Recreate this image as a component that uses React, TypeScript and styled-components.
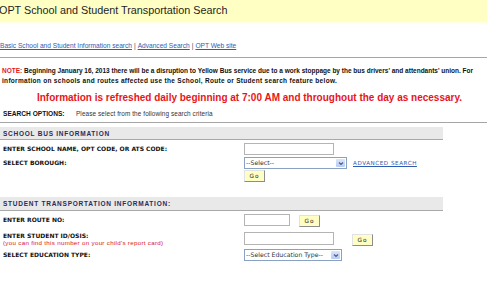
import React from "react";
import styled, { createGlobalStyle } from "styled-components";

const Global = createGlobalStyle`
  html, body { margin: 0; padding: 0; background: #fff; }
  body {
    width: 487px; height: 284px; overflow: hidden;
    font-family: "Liberation Sans", Arial, sans-serif; color: #000;
  }
`;

const Page = styled.div`
  display: flex;
  flex-direction: column;
  width: 487px;
`;

const Header = styled.header`
  height: 24px;
  background: linear-gradient(to bottom, #ffffc4 0, #ffffc4 21px, #ffffff 24px);
`;

const Title = styled.h1`
  margin: 0 0 0 -1px;
  font-size: 10.8px;
  font-weight: normal;
  line-height: 20px;
  color: #1e1e1e;
  white-space: nowrap;
`;

const LinkBar = styled.nav`
  height: 34px;
  box-sizing: border-box;
  padding-top: 18px;
  border-bottom: 1px solid #a6a6a6;
  font-size: 6.6px;
  line-height: 8px;
  color: #444;
  white-space: nowrap;
`;

const NavLink = styled.a`
  color: #2f5cb0;
  text-decoration: underline;
`;

const Sep = styled.span`
  margin: 0 2px;
`;

const Notice = styled.p`
  margin: 0;
  padding: 8px 2px 0;
  font-size: 6.5px;
  font-weight: bold;
  line-height: 9.5px;
  color: #111;
  white-space: nowrap;
`;

const NoticeLine = styled.span<{ $ls: number }>`
  display: block;
  letter-spacing: ${(p) => p.$ls}px;
`;

const NoteTag = styled.span`
  color: #e3161d;
`;

const Refresh = styled.p`
  margin: 7px 0 0;
  padding-left: 12px;
  text-align: center;
  font-size: 10px;
  font-weight: bold;
  line-height: 11px;
  color: #e8141b;
  white-space: nowrap;
`;

const OptionsBar = styled.div`
  display: flex;
  align-items: center;
  margin-top: 7px;
  padding: 0 0 4px 3px;
  line-height: 8px;
  border-bottom: 1px solid #a6a6a6;
`;

const OptionsLabel = styled.span`
  width: 73px;
  font-size: 6.6px;
  font-weight: bold;
  color: #111;
`;

const OptionsText = styled.span`
  font-size: 6.4px;
  letter-spacing: 0.1px;
  color: #333;
  white-space: nowrap;
`;

const Section = styled.section<{ $top: number }>`
  display: flex;
  flex-direction: column;
  margin-top: ${(p) => p.$top}px;
`;

const SectionHeader = styled.h2<{ $h: number }>`
  margin: 0;
  width: 440px;
  height: ${(p) => p.$h}px;
  box-sizing: content-box;
  padding-left: 3px;
  display: flex;
  align-items: center;
  background: #e9e9e9;
  border-bottom: 1px solid #a9a9a9;
  font-size: 6.5px;
  font-weight: bold;
  letter-spacing: 0.75px;
  color: #2b2b5e;
`;

const Row = styled.div<{ $top: number; $h: number; $align?: string }>`
  display: flex;
  align-items: ${(p) => p.$align || "center"};
  margin-top: ${(p) => p.$top}px;
  height: ${(p) => p.$h}px;
`;

const LabelCell = styled.div`
  width: 241px;
  padding-left: 3px;
  display: flex;
  flex-direction: column;
`;

const Label = styled.span`
  font-family: "DejaVu Sans", Verdana, sans-serif;
  font-size: 6px;
  font-weight: bold;
  line-height: 8px;
  color: #111;
  white-space: nowrap;
`;

const Hint = styled.span`
  font-size: 6.2px;
  letter-spacing: 0.3px;
  line-height: 6px;
  color: #d9141b;
  white-space: nowrap;
`;

const Controls = styled.div<{ $gap: number }>`
  display: flex;
  align-items: flex-start;
  gap: ${(p) => p.$gap}px;
`;

const TextBox = styled.input<{ $w: number; $h: number }>`
  width: ${(p) => p.$w}px;
  height: ${(p) => p.$h}px;
  box-sizing: border-box;
  margin: 0;
  padding: 0;
  border: 1px solid #b4b4b4;
  background: #fff;
`;

const SelectBox = styled.div<{ $w: number }>`
  width: ${(p) => p.$w}px;
  height: 12px;
  box-sizing: border-box;
  display: flex;
  align-items: stretch;
  border: 1px solid #8aa2c2;
  background: #fff;
`;

const SelectText = styled.span`
  flex: 1;
  padding-left: 1px;
  font-family: "DejaVu Sans", Verdana, sans-serif;
  font-size: 6.2px;
  line-height: 10px;
  color: #333;
  white-space: nowrap;
  overflow: hidden;
`;

const SelectArrow = styled.span`
  width: 9px;
  margin: 1px;
  display: flex;
  align-items: center;
  justify-content: center;
  background: linear-gradient(to bottom, #dbe5fc, #b8cbf5);
  border-radius: 1px;
`;

const GoButton = styled.button<{ $mt?: number }>`
  width: 21px;
  height: 12px;
  margin: ${(p) => p.$mt || 0}px 0 0;
  padding: 0;
  box-sizing: border-box;
  background: #ffffc4;
  border: 1px solid;
  border-color: #e2e2e2 #8c8c8c #8c8c8c #e2e2e2;
  font-family: "DejaVu Sans", Verdana, sans-serif;
  font-size: 5.8px;
  letter-spacing: 1px;
  line-height: 10px;
  color: #222;
`;

const AdvLink = styled.a`
  margin-left: 6px;
  align-self: center;
  font-family: "DejaVu Sans", Verdana, sans-serif;
  font-size: 5.6px;
  letter-spacing: 0.55px;
  color: #2f5cb0;
  text-decoration: underline;
  white-space: nowrap;
`;

const Chevron = () => (
  <svg width="6" height="5" viewBox="0 0 6 5">
    <path d="M1 1.5 L3 3.5 L5 1.5" fill="none" stroke="#4d6185" strokeWidth="1.2" />
  </svg>
);

const Select = ({ w, text }: { w: number; text: string }) => (
  <SelectBox $w={w}>
    <SelectText>{text}</SelectText>
    <SelectArrow>
      <Chevron />
    </SelectArrow>
  </SelectBox>
);

export default function App() {
  return (
    <Page>
      <Global />
      <Header>
        <Title>OPT School and Student Transportation Search</Title>
      </Header>
      <LinkBar>
        <NavLink>Basic School and Student Information search</NavLink>
        <Sep>|</Sep>
        <NavLink>Advanced Search</NavLink>
        <Sep>|</Sep>
        <NavLink>OPT Web site</NavLink>
      </LinkBar>
      <Notice>
        <NoticeLine $ls={0}>
          <NoteTag>NOTE:</NoteTag> Beginning January 16, 2013 there will be a disruption to Yellow Bus service due to a
          work stoppage by the bus drivers' and attendants' union. For
        </NoticeLine>
        <NoticeLine $ls={0.3}>
          information on schools and routes affected use the School, Route or Student search feature below.
        </NoticeLine>
      </Notice>
      <Refresh>Information is refreshed daily beginning at 7:00 AM and throughout the day as necessary.</Refresh>
      <OptionsBar>
        <OptionsLabel>SEARCH OPTIONS:</OptionsLabel>
        <OptionsText>Please select from the following search criteria</OptionsText>
      </OptionsBar>

      <Section $top={4}>
        <SectionHeader $h={12}>SCHOOL BUS INFORMATION</SectionHeader>
        <Row $top={3} $h={12}>
          <LabelCell>
            <Label>ENTER SCHOOL NAME, OPT CODE, OR ATS CODE:</Label>
          </LabelCell>
          <Controls $gap={0}>
            <TextBox $w={90} $h={12} />
          </Controls>
        </Row>
        <Row $top={2} $h={12}>
          <LabelCell>
            <Label>SELECT BOROUGH:</Label>
          </LabelCell>
          <Controls $gap={0}>
            <Select w={103} text="--Select--" />
            <AdvLink>ADVANCED SEARCH</AdvLink>
          </Controls>
        </Row>
        <Row $top={1} $h={12}>
          <LabelCell />
          <Controls $gap={0}>
            <GoButton>Go</GoButton>
          </Controls>
        </Row>
      </Section>

      <Section $top={15}>
        <SectionHeader $h={13}>STUDENT TRANSPORTATION INFORMATION:</SectionHeader>
        <Row $top={3} $h={12}>
          <LabelCell>
            <Label>ENTER ROUTE NO:</Label>
          </LabelCell>
          <Controls $gap={9}>
            <TextBox $w={46} $h={12} />
            <GoButton $mt={1}>Go</GoButton>
          </Controls>
        </Row>
        <Row $top={6} $h={14} $align="flex-start">
          <LabelCell>
            <Label>ENTER STUDENT ID/OSIS:</Label>
            <Hint>(you can find this number on your child's report card)</Hint>
          </LabelCell>
          <Controls $gap={18}>
            <TextBox $w={90} $h={13} />
            <GoButton $mt={2}>Go</GoButton>
          </Controls>
        </Row>
        <Row $top={3} $h={12}>
          <LabelCell>
            <Label>SELECT EDUCATION TYPE:</Label>
          </LabelCell>
          <Controls $gap={0}>
            <Select w={98} text="--Select Education Type--" />
          </Controls>
        </Row>
      </Section>
    </Page>
  );
}
